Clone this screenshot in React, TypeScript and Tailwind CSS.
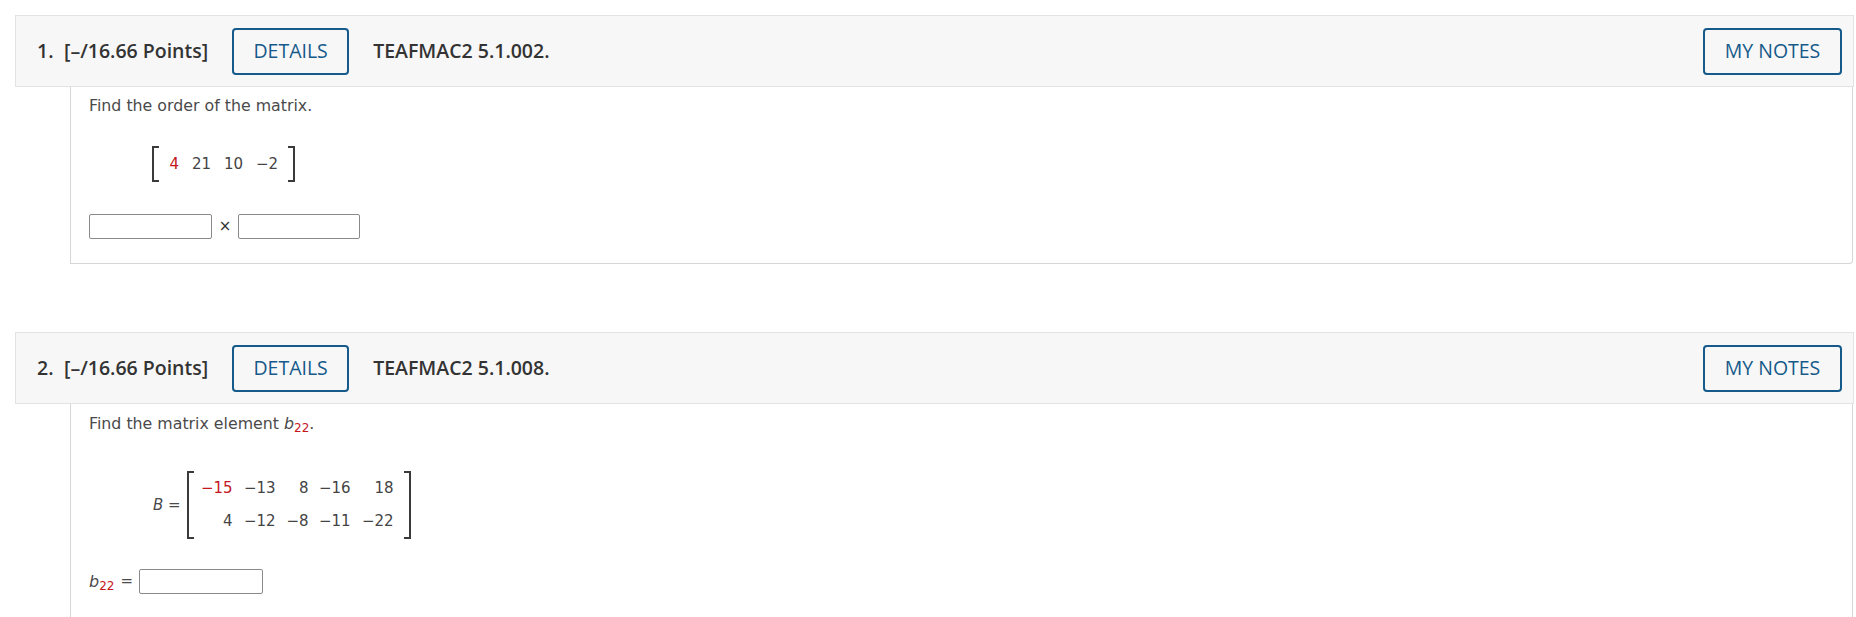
import React from "react";

const RED = "text-[#c4161c]";

function Header({ num, code }: { num: string; code: string }) {
  return (
    <div className="flex items-center h-[72px] bg-[#f7f7f7] border border-[#e3e3e3] pl-[21px] pr-[11px] font-['Open_Sans',sans-serif] text-[19.5px] text-[#333333]">
      <span className="font-semibold w-[27px]">{num}</span>
      <span className="font-semibold">[–/16.66 Points]</span>
      <button className="ml-[24px] h-[47px] w-[117px] rounded-[4px] border-2 border-[#155a8a] text-[#155a8a] font-medium text-[19.5px]">
        DETAILS
      </button>
      <span className="ml-[24px] font-semibold">{code}</span>
      <div className="flex-1" />
      <button className="h-[47px] w-[139px] rounded-[4px] border-2 border-[#155a8a] text-[#155a8a] font-medium text-[19.5px]">
        MY NOTES
      </button>
    </div>
  );
}

function LBracket() {
  return <div className="w-[7px] self-stretch border-l-2 border-t-2 border-b-2 border-[#3a3a3a]" />;
}
function RBracket() {
  return <div className="w-[7px] self-stretch border-r-2 border-t-2 border-b-2 border-[#3a3a3a]" />;
}

function Input({ w }: { w: string }) {
  return <div className={`${w} h-[25px] border border-[#8a8a8a] rounded-[2px] bg-white`} />;
}

export default function App() {
  const body = "font-['DejaVu_Sans',Verdana,sans-serif] text-[#4a4a4a]";
  return (
    <div className="w-[1856px] h-[617px] overflow-hidden bg-white pt-[15px] pl-[15px] pr-[2px]">
      <Header num="1." code="TEAFMAC2 5.1.002." />
      <div className={`ml-[55px] mr-[1px] h-[177px] border-l border-r border-b border-[#d6d6d6] rounded-br-[4px] pl-[18px] pt-[9px] ${body}`}>
        <div className="text-[15.8px] leading-[19px]">Find the order of the matrix.</div>
        <div className="mt-[31px] ml-[63px] flex h-[36px] items-stretch text-[15px]">
          <LBracket />
          <div className="grid grid-cols-[20px_32px_32px_35px] justify-items-end items-center pr-[10px] text-[#444]">
            <span className={RED}>4</span>
            <span>21</span>
            <span>10</span>
            <span>−2</span>
          </div>
          <RBracket />
        </div>
        <div className="mt-[32px] flex items-center">
          <Input w="w-[123px]" />
          <span className="w-[26px] text-center text-[15px] text-[#333]">×</span>
          <Input w="w-[122px]" />
        </div>
      </div>

      <div className="h-[68px]" />

      <Header num="2." code="TEAFMAC2 5.1.008." />
      <div className={`ml-[55px] mr-[1px] h-[240px] border-l border-r border-[#d6d6d6] pl-[18px] pt-[10px] ${body}`}>
        <div className="text-[15.8px] leading-[19px]">
          Find the matrix element <span className="italic">b</span>
          <sub className={`${RED} text-[12px] not-italic`}>22</sub>.
        </div>
        <div className="mt-[38px] ml-[64px] flex items-center text-[15px]">
          <span className="mr-[6px] text-[15px]">
            <span className="italic">B</span> =
          </span>
          <div className="flex h-[68px] items-stretch">
            <LBracket />
            <div className="grid grid-cols-[39px_43px_33px_42px_43px] grid-rows-[33px_33px] content-center justify-items-end items-center pr-[10px] text-[#444]">
              <span className={RED}>−15</span>
              <span>−13</span>
              <span>8</span>
              <span>−16</span>
              <span>18</span>
              <span>4</span>
              <span>−12</span>
              <span>−8</span>
              <span>−11</span>
              <span>−22</span>
            </div>
            <RBracket />
          </div>
        </div>
        <div className="mt-[30px] flex items-center">
          <span className="text-[16px]">
            <span className="italic">b</span>
            <sub className={`${RED} text-[12px]`}>22</sub>
          </span>
          <span className="ml-[6px] mr-[6px] text-[15px]">=</span>
          <Input w="w-[124px]" />
        </div>
      </div>
    </div>
  );
}
